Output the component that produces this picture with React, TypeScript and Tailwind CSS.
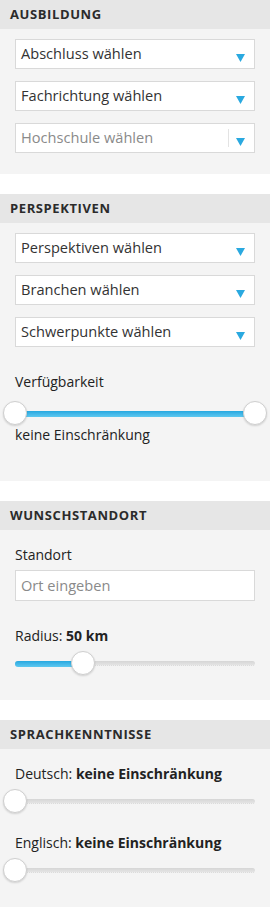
import React from "react";

const font = { fontFamily: '"Open Sans", "Liberation Sans", sans-serif' };

function Header({ title }: { title: string }) {
    return (
        <div className="h-[29px] bg-[#e6e6e6] px-[10px] flex items-center">
            <h2 className="text-[13px] font-bold uppercase tracking-[0.6px] text-[#2b2b2b] leading-none">{title}</h2>
        </div>
    );
}

function Select({ label, placeholder, divider }: { label: string; placeholder?: boolean; divider?: boolean }) {
    return (
        <div className="h-[30px] bg-white border border-[#d9d9d9] flex items-center pl-[5px] pr-[9px]">
            <span className={`flex-1 text-[14.6px] ${placeholder ? "text-[#8a8a8a]" : "text-[#333]"}`}>{label}</span>
            {divider && <div className="w-px h-[18px] bg-[#e3e3e3] mr-[7px]" />}
            <svg width="9" height="8" viewBox="0 0 9 8" className="mt-[8px]">
                <polygon points="0,0 9,0 4.5,8" fill="#2aa9e0" />
            </svg>
        </div>
    );
}

function Thumb({ left }: { left: string }) {
    return (
        <div
            className="absolute top-1/2 w-[24px] h-[24px] -ml-[12px] -mt-[12px] rounded-full bg-white border border-[#cfcfcf] shadow-[0_1px_2px_rgba(0,0,0,0.15)]"
            style={{ left }}
        />
    );
}

function Slider({ value, range }: { value: number; range?: boolean }) {
    return (
        <div className="relative h-[24px]">
            <div className="absolute left-0 right-0 top-1/2 -mt-[2px] h-[5px] rounded-full bg-gradient-to-b from-[#d6d6d6] to-[#e4e4e4] border-b border-dotted border-white/70" />
            <div
                className="absolute left-0 top-1/2 -mt-[2px] h-[6px] rounded-full bg-gradient-to-b from-[#24a8e0] to-[#5cc8f0]"
                style={{ width: `${value}%` }}
            />
            <Thumb left={range ? "0%" : `${value}%`} />
            {range && <Thumb left="100%" />}
        </div>
    );
}

export default function App() {
    return (
        <div className="w-[270px] bg-white text-[#222]" style={font}>
            {/* Ausbildung */}
            <section className="mb-[20px]">
                <Header title="Ausbildung" />
                <div className="bg-[#f4f4f4] px-[15px] pt-[10px] pb-[21px] flex flex-col gap-[12px]">
                    <Select label="Abschluss wählen" />
                    <Select label="Fachrichtung wählen" />
                    <Select label="Hochschule wählen" placeholder divider />
                </div>
            </section>

            {/* Perspektiven */}
            <section className="mb-[20px]">
                <Header title="Perspektiven" />
                <div className="bg-[#f4f4f4] px-[15px] pt-[10px] pb-[36px]">
                    <div className="flex flex-col gap-[12px]">
                        <Select label="Perspektiven wählen" />
                        <Select label="Branchen wählen" />
                        <Select label="Schwerpunkte wählen" />
                    </div>
                    <p className="mt-[25px] text-[14px] leading-[20px]">Verfügbarkeit</p>
                    <div className="mt-[9px]">
                        <Slider value={100} range />
                    </div>
                    <p className="text-[14px] leading-[20px]">keine Einschränkung</p>
                </div>
            </section>

            {/* Wunschstandort */}
            <section className="mb-[20px]">
                <Header title="Wunschstandort" />
                <div className="bg-[#f4f4f4] px-[15px] pt-[15px] pb-[25px]">
                    <p className="text-[14px] leading-[20px]">Standort</p>
                    <div className="mt-[5px] h-[31px] bg-white border border-[#d9d9d9] flex items-center px-[5px]">
                        <span className="text-[14.6px] text-[#8a8a8a]">Ort eingeben</span>
                    </div>
                    <p className="mt-[25px] text-[14px] leading-[20px]">
                        Radius: <b>50 km</b>
                    </p>
                    <div className="mt-[5px]">
                        <Slider value={28.3} />
                    </div>
                </div>
            </section>

            {/* Sprachkenntnisse */}
            <section>
                <Header title="Sprachkenntnisse" />
                <div className="bg-[#f4f4f4] px-[15px] pt-[15px] pb-[25px]">
                    <p className="text-[14px] leading-[20px]">
                        Deutsch: <b>keine Einschränkung</b>
                    </p>
                    <div className="mt-[5px]">
                        <Slider value={0} />
                    </div>
                    <p className="mt-[20px] text-[14px] leading-[20px]">
                        Englisch: <b>keine Einschränkung</b>
                    </p>
                    <div className="mt-[5px]">
                        <Slider value={0} />
                    </div>
                </div>
            </section>
        </div>
    );
}
